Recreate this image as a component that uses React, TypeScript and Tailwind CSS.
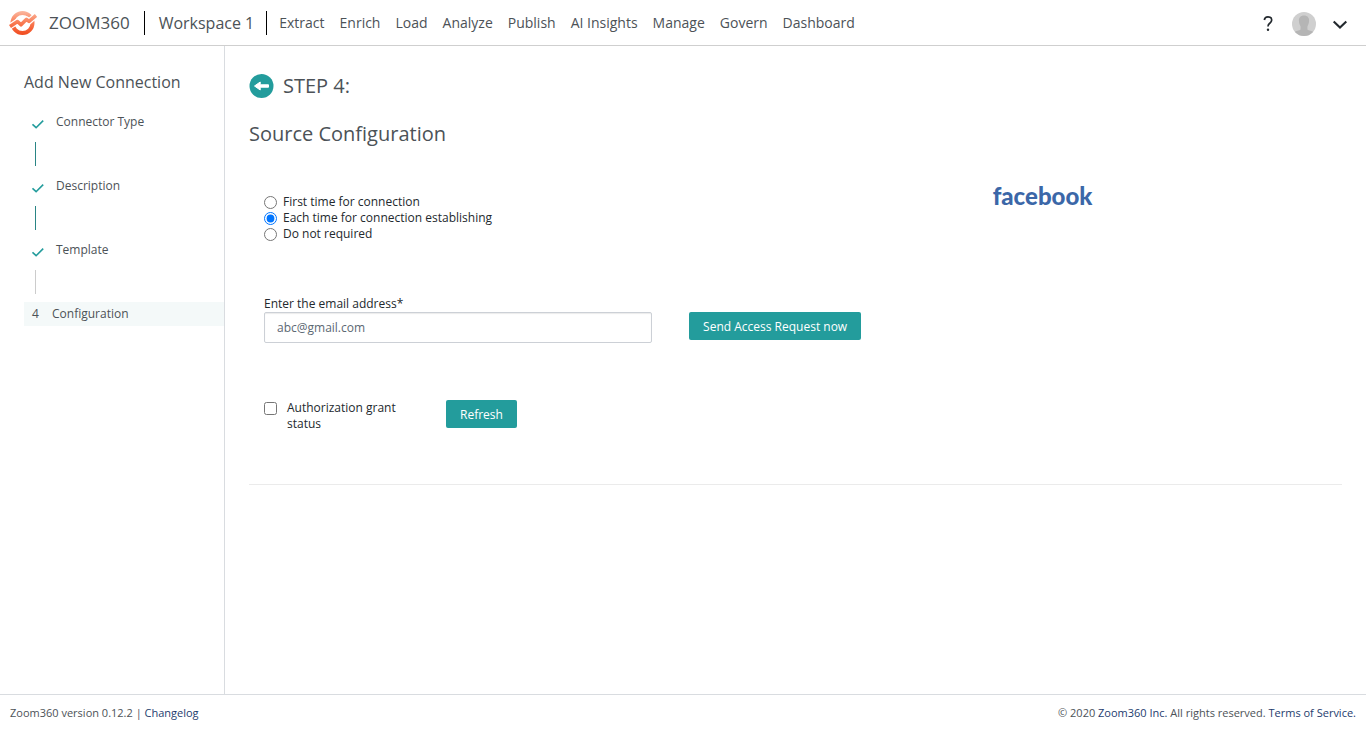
import { useState } from "react";

const navItems = [
  "Extract",
  "Enrich",
  "Load",
  "Analyze",
  "Publish",
  "AI Insights",
  "Manage",
  "Govern",
  "Dashboard",
];

const doneSteps = [
  { label: "Connector Type", line: "bg-[#2a8585]" },
  { label: "Description", line: "bg-[#2a8585]" },
  { label: "Template", line: "bg-[#cccccc]" },
];

const accessOptions = [
  "First time for connection",
  "Each time for connection establishing",
  "Do not required",
];

function Logo() {
  return (
    <svg className="h-6 w-7 shrink-0" viewBox="0 0 28 24" fill="none" aria-hidden="true">
      <defs>
        <linearGradient id="mark" x1="0" y1="0" x2="0" y2="24" gradientUnits="userSpaceOnUse">
          <stop offset="0" stopColor="#fbb8a0" />
          <stop offset="0.5" stopColor="#f97a52" />
          <stop offset="1" stopColor="#f04a1d" />
        </linearGradient>
      </defs>
      <circle cx="13.5" cy="12" r="10" stroke="url(#mark)" strokeWidth="4" />
      <path d="M0 16L8.500 10.500L12 13.800L17.500 8.300L20 10.500L28 3.500" stroke="#fff" strokeWidth="6" strokeLinejoin="round" />
      <path d="M1 15.500L8.500 10.500L12 13.800L17.500 8.300L20 10.300L27 4.500" stroke="url(#mark)" strokeWidth="3.600" strokeLinejoin="round" />
    </svg>
  );
}

function Avatar() {
  return (
    <svg className="size-6" viewBox="0 0 24 24" aria-hidden="true">
      <defs>
        <clipPath id="avatar-clip">
          <circle cx="12" cy="12" r="12" />
        </clipPath>
      </defs>
      <g clipPath="url(#avatar-clip)">
        <rect width="24" height="24" fill="#cfcfcf" />
        <path
          d="M12 3.500c-3.400 0-5.200 2.200-5.100 5.200 0 2.300.9 4 1.500 5.300.3.800.3 3.200 0 3.700C7.500 18.500 4 18.500 2.500 20V24h19v-4c-1.500-1.500-5-1.500-5.900-2.300-.3-.5-.3-2.900 0-3.700.6-1.300 1.500-3 1.500-5.300.1-3-1.700-5.200-5.100-5.200z"
          fill="#b5b5b5"
        />
      </g>
    </svg>
  );
}

function Header() {
  return (
    <header className="flex h-[46px] shrink-0 items-center border-b border-[#cfcfcf] pr-[18px] pl-[9px]">
      <a href="#home" className="flex items-center gap-3 text-[17px] text-[#4c5257]">
        <Logo />
        ZOOM360
      </a>
      <span className="ml-3.5 h-6 w-px bg-black" />
      <a href="#workspace" className="ml-3.5 text-base text-[#4c5257]">
        Workspace 1
      </a>
      <span className="ml-3 h-6 w-px bg-black" />
      <nav className="ml-3 flex gap-[15px] text-sm text-[#4c5257]">
        {navItems.map((item) => (
          <a key={item} href="#nav">
            {item}
          </a>
        ))}
      </nav>
      <div className="ml-auto flex items-center pt-0.5">
        <button type="button" aria-label="Help" className="flex w-3">
          <svg className="h-6 w-3" viewBox="0 0 12 24" fill="none" aria-hidden="true">
            <path
              d="M2.300 8C2.600 6 4 4.800 6 4.800c2.300 0 3.700 1.300 3.700 3.200 0 1.600-.9 2.400-2 3.300C6.500 12.200 6 13 6 14.600"
              stroke="#23292e"
              strokeWidth="1.700"
            />
            <circle cx="6" cy="17.700" r="1.200" fill="#23292e" />
          </svg>
        </button>
        <button type="button" aria-label="Account" className="ml-[18px] flex items-center gap-4">
          <Avatar />
          <svg className="h-6 w-4" viewBox="0 0 16 24" fill="none" aria-hidden="true">
            <path d="M1.700 9.500L8 15.500L14.300 9.500" stroke="#23292e" strokeWidth="2.100" />
          </svg>
        </button>
      </div>
    </header>
  );
}

function Sidebar() {
  return (
    <aside className="w-[225px] shrink-0 border-r border-[#d9dce0] pt-6 pl-6 text-[#4c5257]">
      <h2 className="text-base leading-6">Add New Connection</h2>
      <ol className="mt-4 text-xs leading-6">
        {doneSteps.map((step) => (
          <li key={step.label}>
            <div className="flex h-6 items-center gap-3 pl-2">
              <svg className="mt-1 h-3 w-3 shrink-0" viewBox="0 0 12 12" fill="none" aria-hidden="true">
                <path d="M0.500 6.300L4.100 9.700L11.200 2.600" stroke="#239c9c" strokeWidth="1.600" />
              </svg>
              {step.label}
            </div>
            <div className={`my-2 ml-[11px] h-6 w-px ${step.line}`} />
          </li>
        ))}
        <li aria-current="step" className="flex h-6 items-center gap-3 bg-[#f4f9f9] pl-2">
          <span className="w-2">4</span>
          Configuration
        </li>
      </ol>
    </aside>
  );
}

function Configuration() {
  const [access, setAccess] = useState(accessOptions[1]);
  const [email, setEmail] = useState("");
  const [granted, setGranted] = useState(false);
  const button = "h-7 rounded-xs bg-[#239c9c] px-3.5 pt-px text-xs text-white";

  return (
    <main className="min-w-0 flex-1 px-6 pt-6">
      <div className="flex h-8 items-center gap-[9px] text-xl text-[#4c5257]">
        <button type="button" aria-label="Back">
          <svg className="size-[25px]" viewBox="0 0 25 25" aria-hidden="true">
            <circle cx="12.500" cy="12" r="12" fill="#239c9c" />
            <path
              d="M5.500 12L11.200 8V10.800H19.500V13.200H11.200V16Z"
              fill="#fff"
              stroke="#fff"
              strokeWidth="1"
              strokeLinejoin="round"
            />
          </svg>
        </button>
        <h1>STEP 4:</h1>
      </div>
      <h2 className="mt-4 text-xl leading-8 text-[#4c5257]">Source Configuration</h2>

      <form className="border-b border-[#ebebeb] pb-[52px] text-xs leading-4 text-[#23292e]">
        <div className="grid grid-cols-3 pt-11">
          <fieldset className="col-span-2 pl-[15px]">
            {accessOptions.map((option) => (
              <label key={option} className="flex h-4 items-center gap-1.5">
                <input
                  type="radio"
                  name="access"
                  className="size-[13px]"
                  checked={access === option}
                  onChange={() => setAccess(option)}
                />
                {option}
              </label>
            ))}
          </fieldset>
          <div className="-mt-3.5 pl-[15px] font-['Lato',sans-serif] text-2xl leading-8 font-black text-[#3b67a8]">
            facebook
          </div>
        </div>

        <div className="mt-[54px] flex items-end gap-[37px] pl-[15px]">
          <div className="w-[36%]">
            <label htmlFor="email" className="block">
              Enter the email address*
            </label>
            <input
              id="email"
              type="email"
              placeholder="abc@gmail.com"
              value={email}
              onChange={(event) => setEmail(event.target.value)}
              className="block h-[31px] w-full rounded-xs border border-[#ccd0d6] px-3 text-xs shadow-[inset_0_1px_1px_rgba(0,0,0,0.08)] placeholder:text-[#5c6873]"
            />
          </div>
          <button type="button" className={`${button} mb-[3px]`}>
            Send Access Request now
          </button>
        </div>

        <div className="mt-[57px] flex gap-8 pl-[15px]">
          <label className="flex w-[150px] items-start gap-2.5">
            <input
              type="checkbox"
              className="mt-0.5 size-[13px] shrink-0"
              checked={granted}
              onChange={(event) => setGranted(event.target.checked)}
            />
            <span>Authorization grant status</span>
          </label>
          <button type="button" className={button}>
            Refresh
          </button>
        </div>
      </form>
    </main>
  );
}

function Footer() {
  return (
    <footer className="flex h-9 shrink-0 items-center justify-between border-t border-[#d9dce0] px-2.5 pt-0.5 text-[11px] text-[#4c5257]">
      <p>
        Zoom360 version 0.12.2 |{" "}
        <a href="#changelog" className="text-[#1d3c6e]">
          Changelog
        </a>
      </p>
      <p>
        © 2020{" "}
        <a href="#company" className="text-[#1d3c6e]">
          Zoom360 Inc.
        </a>{" "}
        All rights reserved.{" "}
        <a href="#terms" className="text-[#1d3c6e]">
          Terms of Service.
        </a>
      </p>
    </footer>
  );
}

export default function App() {
  return (
    <div className="flex min-h-screen flex-col bg-white font-['Open_Sans',sans-serif]">
      <Header />
      <div className="flex flex-1">
        <Sidebar />
        <Configuration />
      </div>
      <Footer />
    </div>
  );
}
